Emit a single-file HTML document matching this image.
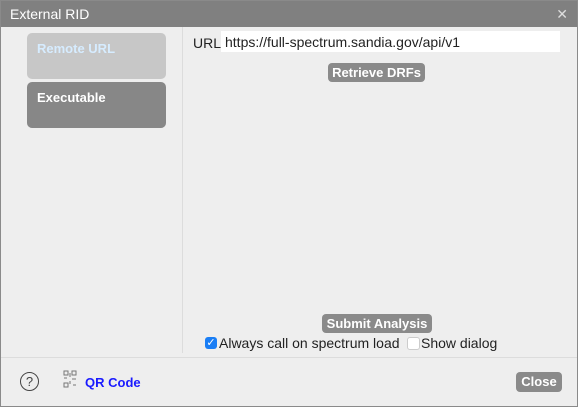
<!DOCTYPE html>
<html><head><style>
body{margin:0;width:578px;height:407px;overflow:hidden;background:#fff;font-family:"Liberation Sans",sans-serif;}
.dlg{position:absolute;left:0;top:0;width:576px;height:405px;background:#eeeeee;border:1px solid #8a8a8a;}
.title{position:absolute;left:0;top:0;width:576px;height:26px;background:#808080;color:#fff;font-size:14px;line-height:26px;}
.title span{position:absolute;left:9px}
.x{position:absolute;right:9px;top:0;font-size:14px;color:#ddd}
.tab{position:absolute;left:26px;width:139px;height:46px;border-radius:5px;font-weight:bold;font-size:13px;box-sizing:border-box;padding:8px 0 0 10px}
.btn{position:absolute;background:#8a8a8a;color:#fff;font-weight:bold;font-size:13px;border-radius:4px;text-align:center;line-height:19px;height:19px}
</style></head><body>
<div class="dlg">
<div class="title"><span>External RID</span><div class="x">✕</div></div>
<div class="tab" style="top:32px;background:#c7c7c7;color:#d6ecff">Remote URL</div>
<div class="tab" style="top:81px;background:#878787;color:#fff">Executable</div>
<div style="position:absolute;left:181px;top:26px;width:1px;height:326px;background:#dcdcdc"></div>
<div style="position:absolute;left:192px;top:34px;font-size:14px;color:#222">URL</div>
<div style="position:absolute;left:220px;top:30px;width:339px;height:21px;background:#fff;font-size:14px;line-height:22px;color:#222;padding-left:4px;box-sizing:border-box">https://full-spectrum.sandia.gov/api/v1</div>
<div class="btn" style="left:327px;top:62px;width:97px">Retrieve DRFs</div>
<div class="btn" style="left:321px;top:313px;width:110px">Submit Analysis</div>
<div style="position:absolute;left:204px;top:336px;width:12px;height:12px;background:#1a7ef5;border-radius:3px;color:#fff;font-size:11px;line-height:12px;text-align:center">✓</div>
<div style="position:absolute;left:218px;top:334px;font-size:14px;color:#222">Always call on spectrum load</div>
<div style="position:absolute;left:406px;top:336px;width:11px;height:11px;background:#fff;border:1px solid #ccc;border-radius:3px"></div>
<div style="position:absolute;left:420px;top:334px;font-size:14px;color:#222">Show dialog</div>
<div style="position:absolute;left:0;top:356px;width:576px;height:1px;background:#dcdcdc"></div>
<div style="position:absolute;left:19px;top:371px;width:17px;height:17px;border:1px solid #444;border-radius:50%;text-align:center;font-size:13px;line-height:17px;color:#444">?</div>
<svg style="position:absolute;left:62px;top:369px" width="14" height="18" viewBox="0 0 14 18" fill="none" stroke="#777" stroke-width="1"><rect x="1" y="1" width="4" height="4"/><rect x="9" y="1" width="4" height="4"/><rect x="1" y="13" width="4" height="4"/><path d="M1 8h3M7 3v4M9 9h4M7 11v3M10 15h3"/></svg>
<div style="position:absolute;left:84px;top:374px;font-size:13px;font-weight:bold;color:#1a1aff">QR Code</div>
<div class="btn" style="left:515px;top:371px;width:46px;height:20px;line-height:20px">Close</div>
</div>
</body></html>
